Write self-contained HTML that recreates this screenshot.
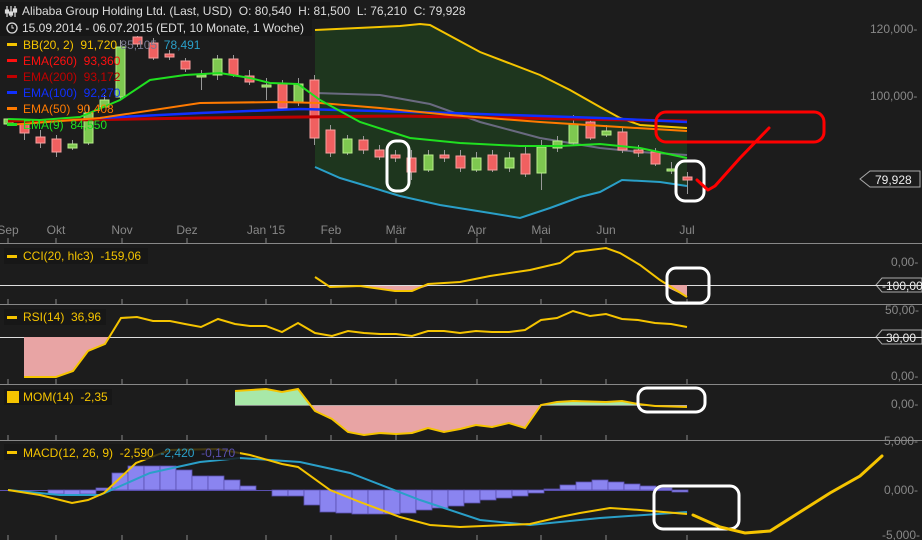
<!DOCTYPE html>
<html><head><meta charset="utf-8"><style>
html,body{margin:0;padding:0;background:#1c1c1c;}
svg{display:block;font-family:"Liberation Sans",sans-serif;}
text{white-space:pre;}
</style></head><body>
<svg width="922" height="540" viewBox="0 0 922 540" xmlns="http://www.w3.org/2000/svg">
<rect width="922" height="540" fill="#1c1c1c"/>
<polygon fill="#1f3a1f" opacity="0.9" points="315,30 400,26 420,24 430,25 480,52 540,75 570,90 600,107 620,118 640,125 687,128 687,186 660,182 622,180 600,192 580,197 550,208 520,218 490,213 440,205 400,196 340,178 315,167"/>
<polyline fill="none" stroke="#6a6a80" stroke-width="2" points="315,93 380,95 430,104 480,122 540,138 600,148 640,152 687,155"/>
<polyline fill="none" stroke="#f5c400" stroke-width="2" points="315,30 400,26 420,24 430,25 480,52 540,75 570,90 600,107 620,118 640,125 687,128"/>
<polyline fill="none" stroke="#2a9fc8" stroke-width="2" points="315,167 340,178 400,196 440,205 490,213 520,218 550,208 580,197 600,192 622,180 660,182 687,186"/>
<!-- wicks -->
<g stroke="#999" stroke-width="1">
<path d="M24.5 120v20M40.5 130v18M56.5 135v22M72.5 140v10M88.5 105v40M104.5 95v12M120.5 40v60M137.5 32v15M153.5 38v22M169.5 50v10M185.5 58v14M201.5 70v20M217.5 55v25M233.5 55v22M249.5 70v15M266.5 78v22M282.5 80v30M298.5 78v28M314.5 75v70M330.5 125v32M347.5 135v20M363.5 136v18M379.5 145v15M395.5 150v12M411.5 150v30M428.5 150v22M444.5 150v12M460.5 150v22M476.5 152v20M492.5 150v22M509.5 152v20M525.5 145v32M541.5 140v50M557.5 136v16M573.5 115v30M590.5 118v22M606.5 125v12M622.5 128v25M638.5 145v12M655.5 148v18M671.5 162v12M687.5 172v22"/>
</g>
<g stroke-width="1">
<g fill="#7ec850" stroke="#b8f08a">
<rect x="4" y="119" width="9" height="5"/><rect x="68" y="144" width="9" height="4"/><rect x="84" y="113" width="9" height="30"/><rect x="100" y="100" width="9" height="7"/><rect x="116" y="47" width="9" height="50"/><rect x="197" y="75" width="9" height="2"/><rect x="213" y="59" width="9" height="16"/><rect x="262" y="85" width="9" height="2"/><rect x="294" y="84" width="9" height="18"/><rect x="343" y="139" width="9" height="14"/><rect x="424" y="155" width="9" height="15"/><rect x="472" y="158" width="9" height="12"/><rect x="505" y="158" width="9" height="10"/><rect x="537" y="147" width="9" height="26"/><rect x="553" y="141" width="9" height="7"/><rect x="569" y="124" width="9" height="19"/><rect x="602" y="131" width="9" height="4"/><rect x="667" y="169" width="9" height="2"/>
</g>
<g fill="#f06060" stroke="#f8a0a0">
<rect x="20" y="124" width="9" height="9"/><rect x="36" y="137" width="9" height="6"/><rect x="52" y="139" width="9" height="13"/><rect x="133" y="37" width="9" height="7"/><rect x="149" y="43" width="9" height="15"/><rect x="165" y="54" width="9" height="3"/><rect x="181" y="61" width="9" height="8"/><rect x="229" y="59" width="9" height="16"/><rect x="245" y="76" width="9" height="6"/><rect x="278" y="84" width="9" height="24"/><rect x="310" y="80" width="9" height="58"/><rect x="326" y="130" width="9" height="23"/><rect x="359" y="140" width="9" height="10"/><rect x="375" y="150" width="9" height="7"/><rect x="391" y="155" width="9" height="3"/><rect x="407" y="158" width="9" height="14"/><rect x="440" y="155" width="9" height="3"/><rect x="456" y="156" width="9" height="12"/><rect x="488" y="155" width="9" height="15"/><rect x="521" y="154" width="9" height="20"/><rect x="586" y="122" width="9" height="16"/><rect x="618" y="132" width="9" height="18"/><rect x="634" y="150" width="9" height="3"/><rect x="651" y="152" width="9" height="12"/><rect x="683" y="177" width="9" height="3"/>
</g>
</g>
<polyline fill="none" stroke="#c00000" stroke-width="3" points="8,121 200,118 400,116 687,121"/>
<polyline fill="none" stroke="#1030ff" stroke-width="2.5" points="100,118 200,113 300,109 450,113 600,118 687,122"/>
<polyline fill="none" stroke="#ff7a00" stroke-width="2" points="8,125 100,118 200,103 280,102 320,103 380,108 450,115 540,122 620,127 687,131"/>
<polyline fill="none" stroke="#20e020" stroke-width="2" points="8,119 40,120 80,117 120,100 150,80 185,75 220,73 250,78 270,83 298,84 320,100 360,122 410,138 460,143 520,146 560,146 600,144 640,148 687,158"/>
<rect x="0" y="2" width="330" height="17" fill="#171717"/>
<rect x="0" y="19" width="312" height="17" fill="#171717"/>
<g font-size="12" fill="#ddd">
<text x="22" y="15">Alibaba Group Holding Ltd. (Last, USD)  O: 80,540  H: 81,500  L: 76,210  C: 79,928</text>
<text x="22" y="32">15.09.2014 - 06.07.2015 (EDT, 10 Monate, 1 Woche)</text>
</g>
<g stroke="#ddd" stroke-width="1.2" fill="none"><path d="M7 6v11M11 6v11M15 6v11"/><rect x="5.5" y="10" width="3" height="3" fill="#ddd"/><rect x="9.5" y="12" width="3" height="3" fill="#ddd"/><rect x="13.5" y="9" width="3" height="3" fill="#ddd"/></g>
<circle cx="12" cy="28" r="5" fill="none" stroke="#ddd" stroke-width="1.3"/><path d="M12 25v3h2" stroke="#ddd" fill="none"/>
<g font-size="12">
<rect x="7" y="43" width="10" height="3" fill="#f5c400"/><text x="23" y="49" fill="#f5c400">BB(20, 2)  91,720 <tspan fill="#7a7a90">85,105</tspan>  <tspan fill="#2a9fc8">78,491</tspan></text>
<rect x="7" y="59" width="10" height="3" fill="#ff1010"/><text x="23" y="65" fill="#ff1010">EMA(260)  93,360</text>
<rect x="7" y="75" width="10" height="3" fill="#c00000"/><text x="23" y="81" fill="#c00000">EMA(200)  93,172</text>
<rect x="7" y="91" width="10" height="3" fill="#1030ff"/><text x="23" y="97" fill="#1030ff">EMA(100)  92,270</text>
<rect x="7" y="107" width="10" height="3" fill="#ff7a00"/><text x="23" y="113" fill="#ff7a00">EMA(50)  90,408</text>
<rect x="7" y="123" width="10" height="3" fill="#20e020"/><text x="23" y="129" fill="#20e020">EMA(9)  84,550</text>
</g>
<g font-size="12" fill="#888">
<text x="870" y="33">120,000-</text><text x="870" y="100">100,000-</text>
<text x="891" y="266">0,00-</text><text x="885" y="314">50,00-</text><text x="891" y="380">0,00-</text><text x="891" y="408">0,00-</text>
<text x="884" y="445">5,000-</text><text x="884" y="494">0,000-</text><text x="882" y="539">-5,000-</text>
</g>
<polygon points="860,179 870,171 920,171 920,187 870,187" fill="#1c1c1c" stroke="#aaa"/>
<text x="875" y="184" font-size="12" fill="#eee">79,928</text>
<polygon points="876,285 882,278 922,278 922,292 882,292" fill="#1c1c1c" stroke="#aaa"/>
<text x="882" y="290" font-size="12" fill="#eee">-100,00</text>
<polygon points="876,337 882,330 922,330 922,344 882,344" fill="#1c1c1c" stroke="#aaa"/>
<text x="886" y="342" font-size="12" fill="#eee">30,00</text>
<g font-size="12" fill="#888" text-anchor="middle">
<text x="8" y="234">Sep</text><text x="56" y="234">Okt</text><text x="122" y="234">Nov</text><text x="187" y="234">Dez</text><text x="266" y="234">Jan '15</text><text x="331" y="234">Feb</text><text x="396" y="234">Mär</text><text x="477" y="234">Apr</text><text x="541" y="234">Mai</text><text x="606" y="234">Jun</text><text x="687" y="234">Jul</text>
</g>
<g stroke="#888" stroke-width="1">
<line x1="0" y1="243.5" x2="922" y2="243.5"/><line x1="0" y1="304.5" x2="922" y2="304.5"/><line x1="0" y1="384.5" x2="922" y2="384.5"/><line x1="0" y1="440.5" x2="922" y2="440.5"/>
</g>
<g stroke="#888" stroke-width="1">
<path d="M8 238v5M56 238v5M122 238v5M187 238v5M266 238v5M331 238v5M396 238v5M477 238v5M541 238v5M606 238v5M687 238v5"/>
<path d="M8 299v5M56 299v5M122 299v5M187 299v5M266 299v5M331 299v5M396 299v5M477 299v5M541 299v5M606 299v5M687 299v5"/>
<path d="M8 379v5M56 379v5M122 379v5M187 379v5M266 379v5M331 379v5M396 379v5M477 379v5M541 379v5M606 379v5M687 379v5"/>
<path d="M8 435v5M56 435v5M122 435v5M187 435v5M266 435v5M331 435v5M396 435v5M477 435v5M541 435v5M606 435v5M687 435v5"/>
<path d="M8 535v5M56 535v5M122 535v5M187 535v5M266 535v5M331 535v5M396 535v5M477 535v5M541 535v5M606 535v5M687 535v5"/>
</g>
<line x1="0" y1="285.5" x2="922" y2="285.5" stroke="#ddd"/>
<polygon fill="#e8a4a4" points="345,286 360,286 395,291 412,291 428,286"/>
<polygon fill="#e8a4a4" points="662,285 687,297 687,285"/>
<polyline fill="none" stroke="#f5c400" stroke-width="2" points="315,277 330,287 360,286 395,291 412,291 428,284 460,282 490,276 530,270 560,263 575,252 606,248 620,253 640,265 660,280 687,297"/>
<rect x="4" y="248" width="144" height="16" fill="#171717"/>
<rect x="7" y="255" width="10" height="3" fill="#f5c400"/><text x="23" y="260" font-size="12" fill="#f5c400">CCI(20, hlc3)  -159,06</text>
<line x1="0" y1="337.5" x2="922" y2="337.5" stroke="#ddd"/>
<polygon fill="#e8a4a4" points="24,337 24,377 56,377 73,371 88,351 105,344 108,337"/>
<polyline fill="none" stroke="#f5c400" stroke-width="2" points="24,377 56,377 73,371 88,351 105,344 121,318 137,317 153,321 170,321 185,324 201,327 218,319 235,324 250,326 266,326 282,332 298,323 315,333 332,336 348,331 364,333 380,334 396,334 412,336 428,331 444,331 460,333 476,331 492,332 509,332 525,330 541,320 557,318 573,311 590,316 606,314 622,319 638,320 655,323 671,324 687,327"/>
<rect x="4" y="309" width="102" height="16" fill="#171717"/>
<rect x="7" y="316" width="10" height="3" fill="#f5c400"/><text x="23" y="321" font-size="12" fill="#f5c400">RSI(14)  36,96</text>
<polygon fill="#a8e8a8" points="235,405 235,391 266,389 282,392 298,389 310,405"/>
<polygon fill="#e8a4a4" points="310,405 315,411 332,419 348,432 364,435 380,433 396,434 412,433 428,428 444,432 460,429 476,425 492,427 509,423 525,428 541,405"/>
<polygon fill="#a8e8a8" points="541,405 557,402 573,401 606,402 622,401 638,404 640,405"/>
<polygon fill="#e8a4a4" points="640,405 655,406 687,407 687,405"/>
<line x1="235" y1="405.5" x2="687" y2="405.5" stroke="#aaa" stroke-width="0.8"/>
<polyline fill="none" stroke="#f5c400" stroke-width="2" points="235,391 266,389 282,392 298,389 315,411 332,419 348,432 364,435 380,433 396,434 412,433 428,428 444,432 460,429 476,425 492,427 509,423 525,428 541,405 557,402 573,401 606,402 622,401 638,404 655,406 687,407"/>
<rect x="4" y="389" width="108" height="16" fill="#171717"/>
<rect x="7" y="391" width="12" height="12" fill="#f5c400"/><text x="23" y="401" font-size="12" fill="#f5c400">MOM(14)  -2,35</text>
<line x1="0" y1="490.5" x2="687" y2="490.5" stroke="#5a50b0"/>
<g fill="#8a84f0" stroke="#5a50b0" stroke-width="0.8">
<rect x="48" y="490" width="16" height="4"/><rect x="64" y="490" width="16" height="5"/><rect x="80" y="490" width="16" height="4"/><rect x="96" y="488" width="16" height="2"/><rect x="112" y="473" width="16" height="17"/><rect x="128" y="466" width="16" height="24"/><rect x="144" y="466" width="16" height="24"/><rect x="160" y="466" width="16" height="24"/><rect x="176" y="470" width="16" height="20"/><rect x="192" y="476" width="16" height="14"/><rect x="208" y="476" width="16" height="14"/><rect x="224" y="480" width="16" height="10"/><rect x="240" y="486" width="16" height="4"/><rect x="272" y="490" width="16" height="6"/><rect x="288" y="490" width="16" height="6"/><rect x="304" y="490" width="16" height="15"/><rect x="320" y="490" width="16" height="22"/><rect x="336" y="490" width="16" height="23"/><rect x="352" y="490" width="16" height="24"/><rect x="368" y="490" width="16" height="24"/><rect x="384" y="490" width="16" height="24"/><rect x="400" y="490" width="16" height="23"/><rect x="416" y="490" width="16" height="20"/><rect x="432" y="490" width="16" height="18"/><rect x="448" y="490" width="16" height="16"/><rect x="464" y="490" width="16" height="13"/><rect x="480" y="490" width="16" height="10"/><rect x="496" y="490" width="16" height="8"/><rect x="512" y="490" width="16" height="6"/><rect x="528" y="490" width="16" height="3"/><rect x="544" y="489" width="16" height="1"/><rect x="560" y="485" width="16" height="5"/><rect x="576" y="482" width="16" height="8"/><rect x="592" y="480" width="16" height="10"/><rect x="608" y="482" width="16" height="8"/><rect x="624" y="484" width="16" height="6"/><rect x="640" y="486" width="16" height="4"/><rect x="656" y="488" width="16" height="2"/><rect x="672" y="490" width="16" height="2"/>
</g>
<polyline fill="none" stroke="#2a9fc8" stroke-width="2" points="8,490 60,495 100,495 150,473 200,462 240,458 300,462 350,473 420,500 480,520 530,525 600,518 687,512"/>
<polyline fill="none" stroke="#f5c400" stroke-width="2" points="8,490 40,495 72,503 88,500 104,493 120,478 136,463 170,450 218,449 250,455 282,464 298,467 330,490 360,502 400,517 430,525 460,527 530,524 560,517 580,513 610,508 640,510 687,514"/>
<rect x="4" y="444" width="236" height="16" fill="#171717" opacity="0.8"/>
<rect x="7" y="451" width="10" height="3" fill="#f5c400"/><text x="23" y="457" font-size="12" fill="#f5c400">MACD(12, 26, 9)  -2,590  <tspan fill="#2a9fc8">-2,420</tspan>  <tspan fill="#5a50b0">-0,170</tspan></text>
<g fill="none" stroke="#fff" stroke-width="3">
<rect x="387" y="141" width="22" height="50" rx="9"/>
<rect x="676" y="161" width="28" height="40" rx="9"/>
<rect x="667" y="268" width="42" height="35" rx="9"/>
<rect x="638" y="388" width="67" height="24" rx="9"/>
<rect x="654" y="486" width="85" height="43" rx="9"/>
</g>
<g fill="none" stroke="#ff0000" stroke-width="3" stroke-linecap="round" stroke-linejoin="round">
<rect x="656" y="112" width="168" height="30" rx="10"/>
<polyline points="769,128 740,158 715,186 708,190 697,180"/>
</g>
<polyline fill="none" stroke="#f5c400" stroke-width="3" stroke-linecap="round" points="693,515 720,527 745,533 770,531 800,512 830,493 860,476 882,456"/>
</svg>
</body></html>
